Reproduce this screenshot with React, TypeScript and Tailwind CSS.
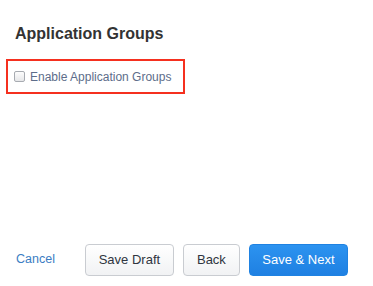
import React, { useState } from 'react'

const App: React.FC = () => {
  const [enabled, setEnabled] = useState(false)

  return (
    <div
      className="flex flex-col h-[286px] w-[373px] bg-white"
      style={{ fontFamily: '"Liberation Sans", Arial, Helvetica, sans-serif' }}
    >
      {/* Header */}
      <h1 className="pl-[15px] pt-[22px] text-[16px] leading-[24px] font-bold text-[#333333]">
        Application Groups
      </h1>

      {/* Highlighted option */}
      <div className="ml-[6px] mt-[13px] w-[179px] h-[35px] border-2 border-[#f5301f] flex items-center pl-[6px]">
        <label className="flex items-center cursor-pointer" onClick={() => setEnabled(!enabled)}>
          <span
            className={`w-[11px] h-[11px] rounded-[2px] border border-[#a7abb1] ${
              enabled ? 'bg-[#2a8ff0]' : 'bg-gradient-to-b from-[#fdfdfd] to-[#e6e7e9]'
            }`}
          />
          <span className="ml-[5px] text-[12px] leading-[16px] text-[#5d6d8a]">
            Enable Application Groups
          </span>
        </label>
      </div>

      {/* Footer actions */}
      <div className="mt-auto pb-[10px] flex items-center">
        <a className="ml-[16px] text-[12.5px] leading-[16px] text-[#3b7dc3] cursor-pointer -mt-[3px]">
          Cancel
        </a>
        <div className="ml-[30px] flex items-center gap-[9px]">
          <button className="h-[32px] w-[89px] rounded-[4px] border border-[#c9ccd1] bg-gradient-to-b from-white to-[#f1f2f4] text-[13px] text-[#2f3540]">
            Save Draft
          </button>
          <button className="h-[32px] w-[57px] rounded-[4px] border border-[#c9ccd1] bg-gradient-to-b from-white to-[#f1f2f4] text-[13px] text-[#2f3540]">
            Back
          </button>
          <button className="h-[32px] w-[99px] rounded-[4px] border border-[#1f82e2] bg-gradient-to-b from-[#2c93f0] to-[#1f80e2] text-[13px] text-white">
            Save &amp; Next
          </button>
        </div>
      </div>
    </div>
  )
}

export default App
